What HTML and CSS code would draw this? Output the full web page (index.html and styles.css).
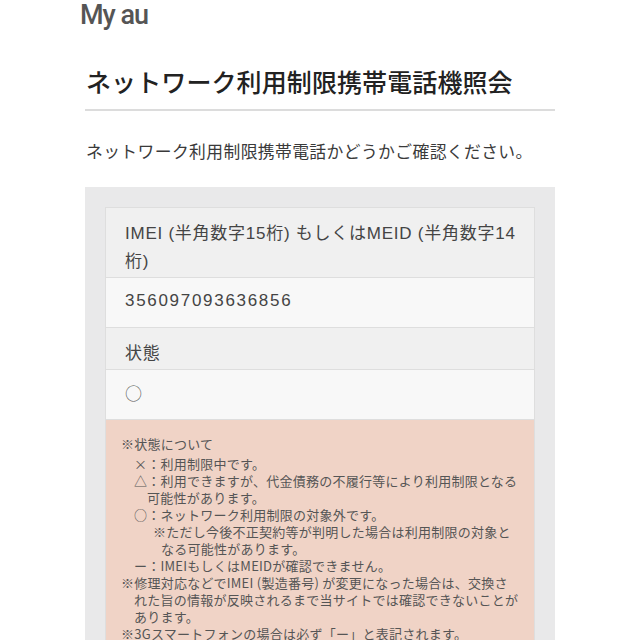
FILE: index.html
```html
<!DOCTYPE html>
<html lang="ja">
<head>
<meta charset="utf-8">
<title>ネットワーク利用制限携帯電話機照会</title>
<link rel="stylesheet" href="styles.css">
</head>
<body>
<header class="site-header">
  <span class="brand">My au</span>
</header>
<main class="page">
  <h1 class="page-title">ネットワーク利用制限携帯電話機照会</h1>
  <p class="lead">ネットワーク利用制限携帯電話かどうかご確認ください。</p>
  <section class="panel">
    <div class="result">
      <div class="row row-head">IMEI (半角数字15桁) もしくはMEID (半角数字14桁)</div>
      <div class="row row-value digits">356097093636856</div>
      <div class="row row-head">状態</div>
      <div class="row row-value mark">○</div>
      <div class="note">
        <p class="note-title">※状態について</p>
        <ul class="status-list">
          <li>×：利用制限中です。</li>
          <li>△：利用できますが、代金債務の不履行等により利用制限となる可能性があります。</li>
          <li>○：ネットワーク利用制限の対象外です。
            <span class="sub">※ただし今後不正契約等が判明した場合は利用制限の対象となる可能性があります。</span>
          </li>
          <li>ー：IMEIもしくはMEIDが確認できません。</li>
        </ul>
        <p class="hang">※修理対応などでIMEI (製造番号) が変更になった場合は、交換された旨の情報が反映されるまで当サイトでは確認できないことがあります。</p>
        <p class="hang">※3Gスマートフォンの場合は必ず「ー」と表記されます。</p>
      </div>
    </div>
  </section>
</main>
</body>
</html>
```

FILE: styles.css
```css
html, body {
  margin: 0;
  padding: 0;
  background: #ffffff;
}

body {
  font-family: "Noto Sans CJK JP", "Noto Sans", sans-serif;
  color: #333;
}

.site-header {
  height: 34px;
  padding-left: 80px;
  display: flex;
  align-items: flex-start;
}

.brand {
  font-family: Roboto, "Noto Sans", sans-serif;
  font-size: 27px;
  font-weight: 500;
  color: #555;
  letter-spacing: -1px;
  line-height: 30px;
}

.page {
  margin-left: 85px;
  width: 470px;
}

.page-title {
  margin: 0;
  padding: 29px 0 10px 1px;
  font-size: 25px;
  font-weight: 500;
  line-height: 36px;
  color: #222;
  border-bottom: 2px solid #dcdcdc;
  letter-spacing: 0.1px;
}

.lead {
  margin: 0;
  padding: 28px 0 0 1px;
  font-size: 16.8px;
  line-height: 24px;
  color: #3a3a3a;
  letter-spacing: 0.4px;
}

.panel {
  margin-top: 24px;
  background: #e9e9ea;
  padding: 20px 20px 0;
}

.result {
  border: 1px solid #dedede;
  border-bottom: none;
}

.row {
  padding-left: 19px;
  padding-right: 12px;
  font-family: "Liberation Sans", "Noto Sans CJK JP", sans-serif;
  font-size: 17px;
  line-height: 28px;
  color: #444;
  letter-spacing: 0.75px;
  border-bottom: 1px solid #dedede;
}

.row-head {
  background: #f0f0f0;
  padding-top: 12px;
  padding-bottom: 1px;
}

.row-value {
  background: #f8f8f8;
  padding-top: 9px;
  padding-bottom: 12px;
}

.digits {
  letter-spacing: 1.7px;
}

.mark {
  font-family: "Noto Sans CJK JP", sans-serif;
  font-weight: 300;
  color: #555;
}

.note {
  background: #f0d3c6;
  padding: 15px 14px 20px 15px;
  font-size: 13px;
  line-height: 17px;
  color: #555;
  letter-spacing: 0.25px;
}

.note p {
  margin: 0;
}

.note-title {
  margin-bottom: 3px !important;
}

.status-list {
  list-style: none;
  margin: 0;
  padding: 0 0 0 13px;
}

.status-list li {
  padding-left: 13px;
  text-indent: -13px;
}

.status-list .sub {
  display: block;
  padding-left: 14px;
  text-indent: -8px;
}

.hang {
  padding-left: 13px;
  text-indent: -13px;
}
```
